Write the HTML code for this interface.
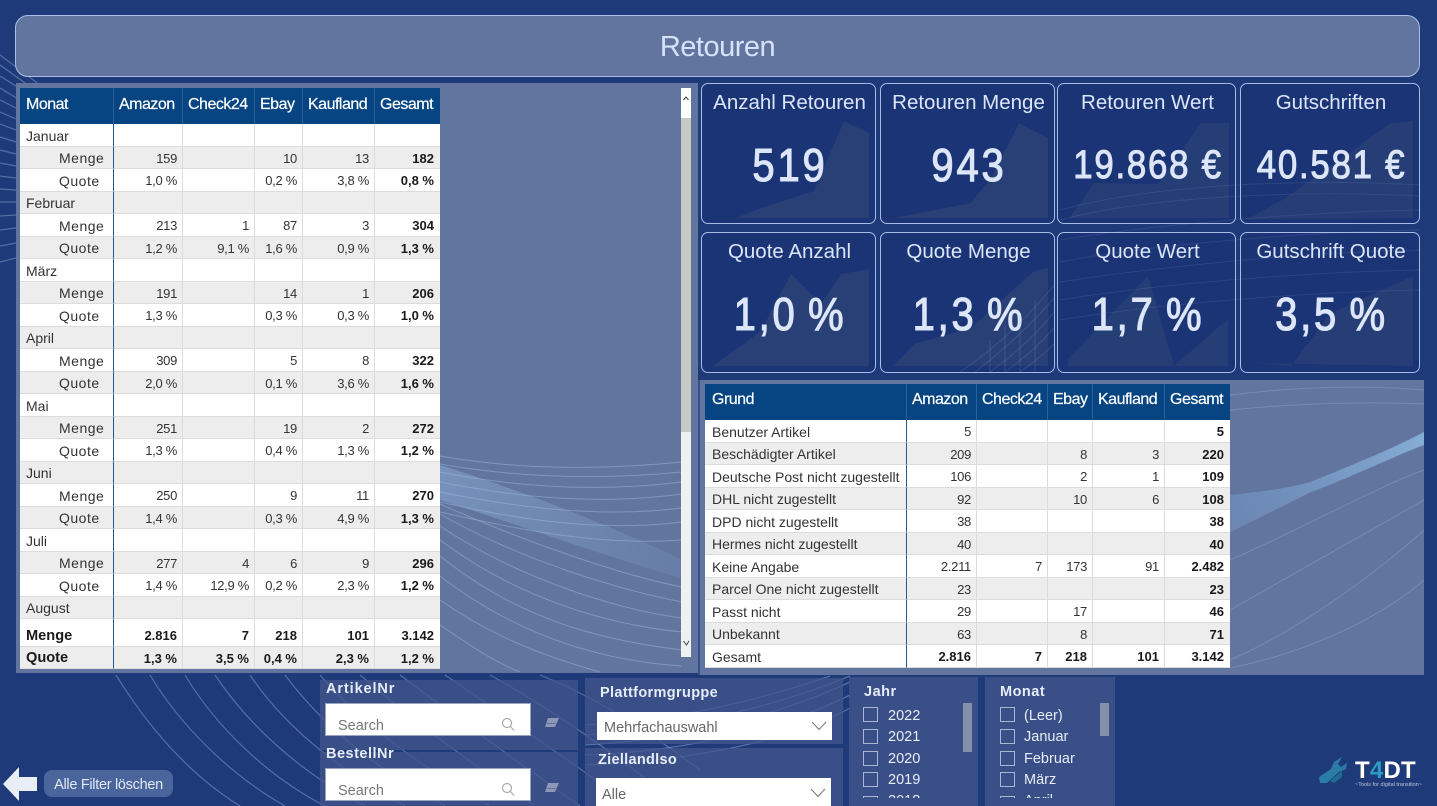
<!DOCTYPE html>
<html lang="de"><head><meta charset="utf-8"><title>Retouren</title>
<style>
html,body{margin:0;padding:0}
body{width:1437px;height:806px;overflow:hidden;position:relative;background:#1f3a78;font-family:"Liberation Sans",sans-serif}
.a{position:absolute}
svg.bg{position:absolute;left:0;top:0}
.panel{position:absolute;background:#62759f}
table{position:absolute;border-collapse:separate;border-spacing:0;table-layout:fixed;background:#fff;color:#333;font-size:13px}
td,th{padding:2px 5px 0 0;text-align:right;overflow:hidden;white-space:nowrap;border-right:1px solid #dcdcdc;border-bottom:1px solid #dcdcdc;font-weight:normal;box-sizing:border-box;letter-spacing:-.3px}
tr.g td{background:#eeeded}
th{background:#064482;color:#fff;font-size:16px;letter-spacing:-.5px;text-align:left;padding:0 0 3px 5px;border-right:1px solid #2a5f97;border-bottom:0;-webkit-text-stroke:.2px #fff}
th:first-child{padding-left:6px}
td:first-child{text-align:left;padding-left:6px;font-size:14px;color:#333;border-right:1px solid #1f5a94;letter-spacing:0}
td.i{padding-left:39px;letter-spacing:.5px}
td.b,tr.t td{font-weight:bold;color:#1a1a1a;letter-spacing:0}
td:last-child{border-right:0;padding-right:6px}
th:last-child{border-right:0}
#t1 tr{height:22.5px}
#t1 tr.h{height:36px}
#t1 tr.sp{height:5px}
#t1 tr.sp td{border-bottom:0;font-size:0;padding:0}
#t1 tr.t td:first-child{font-size:14.6px}
#t2 tr{height:22.5px}
#t2 tr.h{height:36px}
#t2 th{padding-bottom:5px}
#t2 th:first-child{padding-left:7px}
#t2 td:first-child{padding-left:7px}
.card{position:absolute;box-sizing:border-box;border:1px solid #a7bde6;border-radius:7px;background:#1b3476;overflow:hidden;text-align:center;color:#dce6f8}
.card svg{position:absolute;left:0;top:0}
.card .l{position:absolute;left:2px;right:0;top:7px;font-size:20.5px;line-height:24px;white-space:nowrap}
.card .v{position:absolute;left:3px;right:0;top:55px;font-size:46px;line-height:52px;letter-spacing:3.2px;word-spacing:-4px;white-space:nowrap;font-weight:normal;-webkit-text-stroke:1.1px #dce6f8;transform:scaleX(.87)}
.card .v.s{font-size:40px;letter-spacing:2px;word-spacing:0;-webkit-text-stroke:1px #dce6f8}
.sl{position:absolute;background:rgba(66,86,140,.78)}
.st{position:absolute;color:#e6ecf8;font-size:14.5px;font-weight:bold;letter-spacing:.5px;white-space:nowrap}
.in{position:absolute;background:#fff;overflow:hidden;color:#777;font-size:14.5px;white-space:nowrap}
.ck{position:absolute;width:15px;height:15px;border:1.5px solid #a9b6d4;box-sizing:border-box}
.it{position:absolute;color:#e6ecf8;font-size:14.5px;white-space:nowrap}
.clip{position:absolute;overflow:hidden}
</style></head><body>

<svg class="bg" width="1437" height="806" viewBox="0 0 1437 806" fill="none">
<g stroke="#8ba3cf" stroke-opacity=".5" stroke-width="1.2">
<path d="M0 55 L40 85"/><path d="M0 65 L35 90"/><path d="M0 76 L30 95"/><path d="M0 88 L20 100"/>
<path d="M0 100 L16 108"/><path d="M0 112 L16 119"/><path d="M0 124 L16 130"/><path d="M0 137 L16 142"/><path d="M0 150 L16 154"/><path d="M0 163 L16 166"/><path d="M0 176 L16 178"/><path d="M0 189 L16 190"/><path d="M0 202 L16 202"/><path d="M0 216 L16 215"/><path d="M0 230 L16 228"/><path d="M0 246 L16 243"/><path d="M0 262 L16 258"/>
<path d="M116 675 C150 730 190 775 240 806"/>
<path d="M150 675 C180 725 230 775 285 806"/>
<path d="M185 675 C215 725 265 775 325 806"/>
<path d="M215 675 C245 720 295 770 365 806"/>
<path d="M250 675 C280 720 330 765 405 806"/>
<path d="M285 675 C315 715 360 760 445 806"/>
<path d="M320 675 C350 710 400 755 490 806"/>
<path d="M360 675 C395 705 450 750 535 806"/>
<path d="M400 675 C440 705 500 750 580 806"/>
<path d="M445 675 C490 705 545 745 625 800"/>
<path d="M490 675 C535 700 590 735 660 790"/>
<path d="M540 675 C590 695 640 725 700 770"/>
</g>
<g stroke="#8fb0d9" stroke-opacity=".55" stroke-width="1">
<path d="M585 745 C680 740 780 715 850 682"/><path d="M585 735 C680 730 780 705 850 676"/><path d="M585 725 C680 720 760 700 830 676"/><path d="M585 755 C680 752 780 730 850 695"/><path d="M585 765 C680 762 790 742 850 708"/>
</g>
</svg>

<div class="panel" style="left:16px;top:83px;width:682px;height:590px"></div>
<div class="panel" style="left:698px;top:380px;width:726px;height:295px;border-left:2px solid #34508e;box-sizing:border-box"></div>

<svg class="bg" width="1437" height="806" viewBox="0 0 1437 806" fill="none">
<defs><linearGradient id="fan" x1="440" y1="480" x2="682" y2="570" gradientUnits="userSpaceOnUse"><stop offset="0" stop-color="#86a8d2" stop-opacity=".55"/><stop offset="1" stop-color="#86a8d2" stop-opacity=".15"/></linearGradient>
<linearGradient id="band" x1="1230" y1="520" x2="1424" y2="435" gradientUnits="userSpaceOnUse"><stop offset="0" stop-color="#7497c6" stop-opacity=".5"/><stop offset="1" stop-color="#86add6"/></linearGradient></defs>
<path d="M440 465 C520 490 610 525 682 560 L682 578 C600 555 520 525 440 500 Z" fill="url(#fan)"/>
<g stroke="#a9bddc" stroke-opacity=".45" stroke-width="1">
<path d="M440 456 C520 470 600 470 682 462"/><path d="M440 464 C520 478 600 480 682 472"/><path d="M440 472 C520 488 600 492 682 482"/><path d="M440 482 C520 498 600 505 682 494"/><path d="M440 492 C520 508 600 518 682 508"/><path d="M440 502 C520 520 600 532 682 522"/><path d="M440 512 C520 530 600 546 682 540"/>
<path d="M440 504 C520 540 620 575 682 587"/>
<path d="M440 514 C520 560 620 590 682 602"/>
<path d="M440 526 C520 580 620 610 682 618"/>
<path d="M440 540 C520 600 610 625 682 632"/>
<path d="M440 556 C520 620 600 640 682 650"/>
<path d="M440 576 C510 630 590 660 682 666"/>
<path d="M440 600 C490 635 540 655 600 672"/>
<path d="M440 625 C470 645 490 660 520 672"/>
</g>
<path d="M1230 495 C1260 492 1290 488 1310 482 C1340 470 1390 450 1424 432 L1424 445 C1390 458 1340 482 1311 492 C1285 505 1255 520 1230 532Z" fill="url(#band)"/>
<g stroke="#a9bddc" stroke-opacity=".3" stroke-width="1">
<path d="M1230 395 C1310 385 1380 386 1424 390"/><path d="M1230 410 C1310 402 1380 402 1424 404"/>
<path d="M1230 560 C1300 530 1370 490 1424 470"/><path d="M1230 610 C1300 570 1370 530 1424 500"/>
<path d="M1230 660 C1300 630 1380 570 1424 530"/>
<path d="M1230 668 C1320 650 1390 610 1424 580"/>
</g>
</svg>

<!-- Title -->
<div class="a" style="left:15px;top:15px;width:1405px;height:62px;box-sizing:border-box;background:#62759f;border:1.5px solid #a9bfe8;border-radius:13px;color:#d5e2f8;font-size:29px;line-height:63px;text-align:center;letter-spacing:-.5px">Retouren</div>

<!-- Left table -->
<table id="t1" style="left:20px;top:88px;width:420px">
<colgroup><col style="width:94px"><col style="width:69px"><col style="width:72px"><col style="width:48px"><col style="width:72px"><col style="width:65px"></colgroup>
<tr class="h"><th>Monat</th><th>Amazon</th><th>Check24</th><th>Ebay</th><th>Kaufland</th><th>Gesamt</th></tr>
<tr><td>Januar</td><td></td><td></td><td></td><td></td><td></td></tr>
<tr class="g"><td class="i">Menge</td><td>159</td><td></td><td>10</td><td>13</td><td class="b">182</td></tr>
<tr><td class="i">Quote</td><td>1,0 %</td><td></td><td>0,2 %</td><td>3,8 %</td><td class="b">0,8 %</td></tr>
<tr class="g"><td>Februar</td><td></td><td></td><td></td><td></td><td></td></tr>
<tr><td class="i">Menge</td><td>213</td><td>1</td><td>87</td><td>3</td><td class="b">304</td></tr>
<tr class="g"><td class="i">Quote</td><td>1,2 %</td><td>9,1 %</td><td>1,6 %</td><td>0,9 %</td><td class="b">1,3 %</td></tr>
<tr><td>März</td><td></td><td></td><td></td><td></td><td></td></tr>
<tr class="g"><td class="i">Menge</td><td>191</td><td></td><td>14</td><td>1</td><td class="b">206</td></tr>
<tr><td class="i">Quote</td><td>1,3 %</td><td></td><td>0,3 %</td><td>0,3 %</td><td class="b">1,0 %</td></tr>
<tr class="g"><td>April</td><td></td><td></td><td></td><td></td><td></td></tr>
<tr><td class="i">Menge</td><td>309</td><td></td><td>5</td><td>8</td><td class="b">322</td></tr>
<tr class="g"><td class="i">Quote</td><td>2,0 %</td><td></td><td>0,1 %</td><td>3,6 %</td><td class="b">1,6 %</td></tr>
<tr><td>Mai</td><td></td><td></td><td></td><td></td><td></td></tr>
<tr class="g"><td class="i">Menge</td><td>251</td><td></td><td>19</td><td>2</td><td class="b">272</td></tr>
<tr><td class="i">Quote</td><td>1,3 %</td><td></td><td>0,4 %</td><td>1,3 %</td><td class="b">1,2 %</td></tr>
<tr class="g"><td>Juni</td><td></td><td></td><td></td><td></td><td></td></tr>
<tr><td class="i">Menge</td><td>250</td><td></td><td>9</td><td>11</td><td class="b">270</td></tr>
<tr class="g"><td class="i">Quote</td><td>1,4 %</td><td></td><td>0,3 %</td><td>4,9 %</td><td class="b">1,3 %</td></tr>
<tr><td>Juli</td><td></td><td></td><td></td><td></td><td></td></tr>
<tr class="g"><td class="i">Menge</td><td>277</td><td>4</td><td>6</td><td>9</td><td class="b">296</td></tr>
<tr><td class="i">Quote</td><td>1,4 %</td><td>12,9 %</td><td>0,2 %</td><td>2,3 %</td><td class="b">1,2 %</td></tr>
<tr class="g"><td>August</td><td></td><td></td><td></td><td></td><td></td></tr>
<tr class="sp"><td></td><td></td><td></td><td></td><td></td><td></td></tr>
<tr class="t"><td>Menge</td><td>2.816</td><td>7</td><td>218</td><td>101</td><td>3.142</td></tr>
<tr class="t g"><td>Quote</td><td>1,3 %</td><td>3,5 %</td><td>0,4 %</td><td>2,3 %</td><td>1,2 %</td></tr>
</table>

<!-- Scrollbar -->
<div class="a" style="left:681px;top:88px;width:10px;height:569px;background:#f0f0f0"></div>
<div class="a" style="left:681px;top:118px;width:10px;height:314px;background:#c9c9c6"></div>
<div class="a" style="left:681px;top:88px;width:10px;height:30px;background:#fff"></div>
<svg class="a" style="left:681px;top:88px" width="10" height="569" fill="none" stroke="#444" stroke-width="1"><path d="M2.5 12 L5 9 L7.5 12"/><path d="M2.5 553 L5.5 557 L8 553"/></svg>

<!-- KPI cards -->
<div class="card" style="left:701px;top:83px;width:175px;height:141px"><svg width="175" height="141"><path d="M34 134 L59 124 L112 107 L142 37 L167 49 L167 134Z" fill="#2f4676" fill-opacity=".65"/></svg><div class="l">Anzahl Retouren</div><div class="v">519</div></div>
<div class="card" style="left:880px;top:83px;width:175px;height:141px"><svg width="175" height="141"><path d="M13 134 L90 119 L110 94 L138 39 L167 54 L167 134Z" fill="#2f4676" fill-opacity=".65"/></svg><div class="l">Retouren Menge</div><div class="v">943</div></div>
<div class="card" style="left:1057px;top:83px;width:179px;height:141px"><svg width="179" height="141"><path d="M13 132 L36 99 L100 100 L143 39 L171 39 L171 134 L13 134Z" fill="#2f4676" fill-opacity=".6"/></svg><div class="l">Retouren Wert</div><div class="v s">19.868 €</div></div>
<div class="card" style="left:1240px;top:83px;width:180px;height:141px"><svg width="180" height="141"><path d="M7 135 L43 115 L150 39 L172 37 L172 134Z" fill="#2f4676" fill-opacity=".55"/></svg><div class="l">Gutschriften</div><div class="v s">40.581 €</div></div>
<div class="card" style="left:701px;top:232px;width:175px;height:141px"><svg width="175" height="141"><path d="M11 133 L59 98 L89 41 L119 71 L139 41 L167 36 L167 133Z" fill="#2f4676" fill-opacity=".65"/></svg><div class="l">Quote Anzahl</div><div class="v">1,0 %</div></div>
<div class="card" style="left:880px;top:232px;width:175px;height:141px"><svg width="175" height="141"><path d="M13 133 L33 111 L90 95 L153 38 L167 35 L167 133Z" fill="#2f4676" fill-opacity=".65"/></svg><div class="l">Quote Menge</div><div class="v">1,3 %</div></div>
<div class="card" style="left:1057px;top:232px;width:179px;height:141px"><svg width="179" height="141"><path d="M10 126 L90 43 L116 133 L170 86 L170 133 L10 133Z" fill="#2f4676" fill-opacity=".6"/></svg><div class="l">Quote Wert</div><div class="v">1,7 %</div></div>
<div class="card" style="left:1240px;top:232px;width:180px;height:141px"><svg width="180" height="141"><path d="M10 130 L50 133 L90 80 L172 43 L172 133Z" fill="#2f4676" fill-opacity=".55"/></svg><div class="l">Gutschrift Quote</div><div class="v">3,5 %</div></div>

<!-- faint waves over cards -->
<svg class="bg" width="1437" height="806" viewBox="0 0 1437 806" fill="none">
<g stroke="#9db4dc" stroke-opacity=".13" stroke-width="1">
<path d="M1060 210 C1150 185 1300 178 1420 185"/><path d="M1060 220 C1150 196 1300 190 1420 196"/><path d="M1060 240 C1150 225 1300 212 1420 210"/><path d="M1060 262 C1150 245 1300 232 1420 230"/><path d="M1060 282 C1150 268 1300 252 1420 250"/><path d="M1060 300 C1150 285 1300 272 1420 270"/><path d="M1060 320 C1150 305 1300 292 1420 290"/>
</g>
<g stroke="#8fb0de" stroke-opacity=".18" stroke-width="1">
<path d="M960 372 C1000 345 1030 315 1054 285"/><path d="M975 372 C1010 345 1035 320 1054 298"/><path d="M990 372 C1020 350 1040 330 1054 312"/><path d="M1005 372 C1028 355 1044 340 1054 328"/><path d="M1020 372 C1034 362 1046 352 1054 344"/>
<path d="M990 340 V372"/><path d="M1005 325 V372"/><path d="M1020 315 V372"/><path d="M1035 300 V372"/>
</g>
</svg>

<!-- Right table -->
<table id="t2" style="left:705px;top:384px;width:525px">
<colgroup><col style="width:202px"><col style="width:70px"><col style="width:71px"><col style="width:45px"><col style="width:72px"><col style="width:65px"></colgroup>
<tr class="h"><th>Grund</th><th>Amazon</th><th>Check24</th><th>Ebay</th><th>Kaufland</th><th>Gesamt</th></tr>
<tr><td>Benutzer Artikel</td><td>5</td><td></td><td></td><td></td><td class="b">5</td></tr>
<tr class="g"><td>Beschädigter Artikel</td><td>209</td><td></td><td>8</td><td>3</td><td class="b">220</td></tr>
<tr><td>Deutsche Post nicht zugestellt</td><td>106</td><td></td><td>2</td><td>1</td><td class="b">109</td></tr>
<tr class="g"><td>DHL nicht zugestellt</td><td>92</td><td></td><td>10</td><td>6</td><td class="b">108</td></tr>
<tr><td>DPD nicht zugestellt</td><td>38</td><td></td><td></td><td></td><td class="b">38</td></tr>
<tr class="g"><td>Hermes nicht zugestellt</td><td>40</td><td></td><td></td><td></td><td class="b">40</td></tr>
<tr><td>Keine Angabe</td><td>2.211</td><td>7</td><td>173</td><td>91</td><td class="b">2.482</td></tr>
<tr class="g"><td>Parcel One nicht zugestellt</td><td>23</td><td></td><td></td><td></td><td class="b">23</td></tr>
<tr><td>Passt nicht</td><td>29</td><td></td><td>17</td><td></td><td class="b">46</td></tr>
<tr class="g"><td>Unbekannt</td><td>63</td><td></td><td>8</td><td></td><td class="b">71</td></tr>
<tr class="t"><td style="font-weight:normal;color:#333">Gesamt</td><td>2.816</td><td>7</td><td>218</td><td>101</td><td>3.142</td></tr>
</table>

<!-- Slicers -->
<div class="sl" style="left:320px;top:680px;width:258px;height:70px"></div>
<div class="st" style="left:326px;top:681px;letter-spacing:.9px">ArtikelNr</div>
<div class="in" style="left:326px;top:704px;width:204px;height:31px;box-shadow:0 0 0 1px #9aa5bf"><span class="a" style="left:12px;top:14px">Search</span></div>
<svg class="a" style="left:500px;top:716px" width="16" height="16" fill="none" stroke="#aaa" stroke-width="1.2"><circle cx="7" cy="7" r="4.5"/><path d="M10.5 10.5 L14 14.5"/></svg>
<svg class="a" style="left:543px;top:716px" width="18" height="14"><path d="M5 2 H16 L12 11 H2Z" fill="#8c98b5"/><path d="M3.6 7.5 H14" stroke="#62759f"/></svg>

<div class="sl" style="left:320px;top:752px;width:258px;height:54px"></div>
<div class="st" style="left:326px;top:746px">BestellNr</div>
<div class="in" style="left:326px;top:769px;width:204px;height:31px;box-shadow:0 0 0 1px #9aa5bf"><span class="a" style="left:12px;top:14px">Search</span></div>
<svg class="a" style="left:500px;top:781px" width="16" height="16" fill="none" stroke="#aaa" stroke-width="1.2"><circle cx="7" cy="7" r="4.5"/><path d="M10.5 10.5 L14 14.5"/></svg>
<svg class="a" style="left:543px;top:781px" width="18" height="14"><path d="M5 2 H16 L12 11 H2Z" fill="#8c98b5"/><path d="M3.6 7.5 H14" stroke="#62759f"/></svg>

<div class="sl" style="left:585px;top:678px;width:258px;height:66px"></div>
<div class="st" style="left:600px;top:685px;letter-spacing:.35px">Plattformgruppe</div>
<div class="in" style="left:597px;top:712px;width:235px;height:28px;color:#666"><span class="a" style="left:7px;top:8px">Mehrfachauswahl</span></div>
<svg class="a" style="left:811px;top:721px" width="16" height="10" fill="none" stroke="#777" stroke-width="1"><path d="M1 1 L8 8.5 L15 1"/></svg>

<div class="sl" style="left:585px;top:748px;width:258px;height:58px"></div>
<div class="st" style="left:598px;top:752px;letter-spacing:.3px">Ziellandlso</div>
<div class="in" style="left:596px;top:778px;width:235px;height:28px;color:#666"><span class="a" style="left:6px;top:9px">Alle</span></div>
<svg class="a" style="left:810px;top:788px" width="16" height="10" fill="none" stroke="#777" stroke-width="1"><path d="M1 1 L8 8.5 L15 1"/></svg>

<div class="sl" style="left:849px;top:677px;width:129px;height:129px"></div>
<div class="st" style="left:864px;top:684px">Jahr</div>
<div class="a" style="left:963px;top:703px;width:9px;height:49px;background:#848fa9"></div>
<div class="clip" style="left:849px;top:700px;width:110px;height:98px">
<div class="ck" style="left:14px;top:7px"></div><div class="it" style="left:39px;top:8px">2022</div>
<div class="ck" style="left:14px;top:29px"></div><div class="it" style="left:39px;top:29px">2021</div>
<div class="ck" style="left:14px;top:51px"></div><div class="it" style="left:39px;top:51px">2020</div>
<div class="ck" style="left:14px;top:72px"></div><div class="it" style="left:39px;top:72px">2019</div>
<div class="ck" style="left:14px;top:96px"></div><div class="it" style="left:39px;top:93px">2018</div>
</div>

<div class="sl" style="left:985px;top:677px;width:130px;height:129px"></div>
<div class="st" style="left:1000px;top:684px">Monat</div>
<div class="a" style="left:1100px;top:703px;width:9px;height:33px;background:#848fa9"></div>
<div class="clip" style="left:985px;top:700px;width:112px;height:98px">
<div class="ck" style="left:15px;top:7px"></div><div class="it" style="left:39px;top:8px">(Leer)</div>
<div class="ck" style="left:15px;top:29px"></div><div class="it" style="left:39px;top:29px">Januar</div>
<div class="ck" style="left:15px;top:51px"></div><div class="it" style="left:39px;top:51px">Februar</div>
<div class="ck" style="left:15px;top:72px"></div><div class="it" style="left:39px;top:72px">März</div>
<div class="ck" style="left:15px;top:96px"></div><div class="it" style="left:39px;top:93px">April</div>
</div>

<!-- Back arrow + button -->
<svg class="a" style="left:3px;top:767px" width="35" height="34"><path d="M0 17 L16 0 V10 H34 V24 H16 V34Z" fill="#e9edf5"/></svg>
<div class="a" style="left:44px;top:770px;width:129px;height:27px;background:#4a659c;border-radius:8px;color:#e3eaf7;font-size:14.5px;line-height:30px;text-align:center;white-space:nowrap;letter-spacing:-.3px">Alle Filter löschen</div>

<!-- Logo -->
<svg class="a" style="left:1314px;top:754px" width="36" height="32" fill="none">
<path d="M28 3 L24 10 L27 13 L33 9 L32 15 L25 18 L13 29 L6 29 L5 23 L17 15 L20 8Z" fill="#2a7ca6"/>
<path d="M28 17 L24 20 L16 27 L20 29 L28 23Z" fill="#1f6d93"/>
</svg>
<div class="a" style="left:1355px;top:757px;color:#fff;font-size:24px;line-height:28px;font-weight:bold;letter-spacing:.2px;white-space:nowrap">T<span style="color:#2b9cc4">4</span>DT</div>
<div class="a" style="left:1355px;top:782px;color:#b9c8e0;font-size:5.5px;line-height:7px;white-space:nowrap">~Tools for digital transition~</div>

</body></html>
